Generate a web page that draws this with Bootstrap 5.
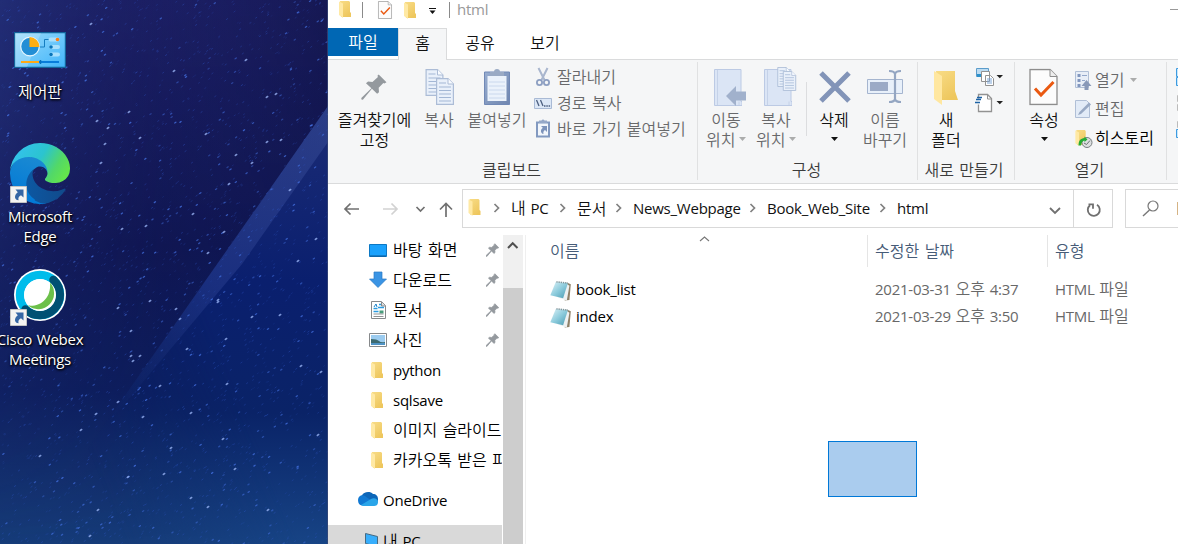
<!DOCTYPE html>
<html lang="ko">
<head>
<meta charset="utf-8">
<meta name="viewport" content="width=device-width, initial-scale=1">
<title>html</title>
<link href="https://cdn.jsdelivr.net/npm/bootstrap@5.3.0/dist/css/bootstrap.min.css" rel="stylesheet">
<style>
  body{width:1178px;height:544px;overflow:hidden;font-family:"Noto Sans CJK KR",sans-serif;font-size:16px;line-height:20px;color:#111;word-spacing:1px;font-weight:350}
  svg{display:block;flex:none}
  .lt{font-family:"Open Sans","Noto Sans CJK KR",sans-serif;font-size:15px;letter-spacing:-.24px;font-weight:400}
  .kt{font-family:"Noto Sans CJK KR",sans-serif;font-size:16px;letter-spacing:0;font-weight:350}
  .desk{width:328px;height:544px;overflow:hidden;background:#0e1552}
  .sky{left:0;top:0}
  .dicons{width:80px;padding-top:28px}
  .dicon{color:#fff;text-shadow:1px 1px 2px #000,0 1px 3px #000;white-space:nowrap}
  .dicon>svg{margin-bottom:-1px}
  .win{width:850px;height:544px;overflow:hidden;background:#fff}
  .titlebar{height:28px}
  .tabs{height:32px;border-bottom:1px solid #dadbdc}
  .tab{height:28px;line-height:28px;text-align:center}
  .tab-file{width:70px;background:#0067b4;color:#fff;line-height:27px}
  .tab-on{width:49px;height:32px;background:#f5f6f7;border:1px solid #dadbdc;border-bottom:0;line-height:27px}
  .ribbon{height:124px;background:#f5f6f7;border-bottom:1px solid #dadbdc}
  .grp{height:118px;margin-top:2px;border-right:1px solid #e0e1e2;flex:none}
  .grp-items{height:96px;padding-top:4px}
  .grp-name{color:#3c3c3c;text-align:center;margin-top:1px;padding-right:2px}
  .big{text-align:center;white-space:nowrap;flex:none}
  .big>svg{margin:0 auto -1px}
  .off{color:#68696b}
  .rowi{height:26px;white-space:nowrap}
  .rowi span,.opens span{margin-top:-2px}
  .vline{width:1px;height:54px;background:#dcdddf;margin-top:16px;flex:none}
  .nav-row{height:51px;padding-top:5px}
  .box{height:39px;border:1px solid #d9d9d9}
  .crumbs{padding-left:5px;padding-bottom:2px}
  .side{width:174px;overflow:hidden}
  .side-item{height:30px;width:174px;white-space:nowrap;color:#000;position:relative}
  .side-item:not(.lt){padding-bottom:2px}
  .side-item:not(.lt)>svg:first-child{margin-top:2px}
  .side-item .pin{position:absolute;right:3px;top:8px;background:#fff;stroke:#94999e;stroke-width:1.5}
  .sel-row{background:#d9d9d9;height:30px}
  .scroll{width:20px;background:#f0f0f0;margin-left:1px}
  .thumb{background:#cdcdcd;height:256px}
  .hd{height:32px;color:#465b77;line-height:30px}
  .hd>div{border-right:1px solid #e5e5e5;flex:none}
  .filerow{height:27px}
  .filerow svg{margin:4px 5px 0 -1px}
  .dim{color:#686868}
  .marquee-box{position:absolute;left:500px;top:441px;width:89px;height:56px;background:#aaccee;border:1px solid #0078d7}
</style>
</head>
<body>
<svg width="0" height="0" class="position-absolute">
  <defs>
    <linearGradient id="gf" x1="0" y1="0" x2="0.6" y2="1"><stop offset="0" stop-color="#f8dc86"/><stop offset="1" stop-color="#eec75e"/></linearGradient>
    <linearGradient id="gp" x1="0" y1="0" x2="1" y2="1"><stop offset="0" stop-color="#dff3f8"/><stop offset=".5" stop-color="#8ccbdc"/><stop offset="1" stop-color="#4799b0"/></linearGradient>
    <linearGradient id="gb" x1="0" y1="0" x2="1" y2="1"><stop offset="0" stop-color="#98add0"/><stop offset="1" stop-color="#6f86b0"/></linearGradient>
    <symbol id="folder" viewBox="0 0 12 17"><path d="M1 0h9l1 1v10l1 1v4H2z" fill="url(#gf)"/><path d="M0 .5 4 2.6V17L0 14z" fill="#ffe9a4"/></symbol>
    <symbol id="pin" viewBox="0 0 25 25"><path d="M17 .5 24.500 8 22.500 9.200 21.500 8.700 17 13.200 17.300 17.500 15.500 19 10.500 14.300 1.800 24.800.4 24.600.3 23 10 13.800 4.800 8.900 6.800 7.300 11 7.600 16.300 2.800 15.800 1.800z" fill="#94999e"/></symbol>
    <symbol id="notepad" viewBox="0 0 20 19"><path d="M16 1.500 19.800 3 18.500 18 14 18.500z" fill="#8e8068"/><path d="M15 2 18.500 4.500 16 18.500 7 15.500z" fill="#edf1f2"/><path d="M5.500 1 17 2 12.500 16.500.3 13.500z" fill="url(#gp)"/><path d="M6 .8 17 2" stroke="#81969c" stroke-width="1.400" stroke-dasharray="1.300 .8"/></symbol>
    <symbol id="sheet" viewBox="0 0 18 27"><path d="M.6.6H12L17.400 6V26.400H.6z" fill="#e9f0fa" stroke="#acbcd6" stroke-width="1.200"/><path d="M12 .6V6h5.400" fill="#f8fbff" stroke="#acbcd6"/><path d="M3 5h7M3 9h12M3 12.500h12M3 16h12M3 19.500h12M3 23h12" stroke="#a3b7d5"/></symbol>
    <symbol id="check" viewBox="0 0 29 37"><path d="M1 1H21L28 8V36H1z" fill="#fcfcfc" stroke="#8d8d8d" stroke-width="1.300"/><path d="M21 1V8h7" fill="#eee" stroke="#8d8d8d"/><path d="m6 20 6 6.500L24.500 13.500" fill="none" stroke="#ea5911" stroke-width="3"/></symbol>
    <symbol id="tri" viewBox="0 0 7 4"><path d="M0 0h7L3.500 4z" fill="currentColor"/></symbol>
    <symbol id="chev" viewBox="0 0 28 12"><path d="m11.500 2 4 4-4 4" fill="none" stroke="#808080" stroke-width="1.700"/></symbol>
    <symbol id="short" viewBox="0 0 17 17"><path d="M.5.5h16v16H.5z" fill="#f4f4f2" stroke="#c3c3c3"/><path d="M5.500 3.500h8v8l-2.500-2.300C8.500 10.500 8 12 8.600 14.300 4.500 14 3.500 9.500 7.800 6.200z" fill="#3566a4"/></symbol>
    <symbol id="book" viewBox="0 0 28 37"><path d="M.5.500H27V32.500H28V36.500H.5z" fill="#dbe5f5" stroke="#bccae4"/><path d="M3.500 1V36M25 32.500V36" stroke="#c5d2e8"/></symbol>
  </defs>
</svg>
<main class="d-flex">
  <section class="desk position-relative flex-shrink-0">
    <svg id="sky" class="sky position-absolute" width="328" height="544" viewBox="0 0 328 544">
      <defs>
        <linearGradient id="s1" x1="0" y1="0" x2="0" y2="1"><stop offset="0" stop-color="#1c1f64"/><stop offset=".45" stop-color="#0f1652"/><stop offset=".72" stop-color="#0c1d5c"/><stop offset="1" stop-color="#163c79"/></linearGradient>
        <linearGradient id="s2" x1="0" y1="0" x2="1" y2="0"><stop offset="0" stop-color="#25357f" stop-opacity=".65"/><stop offset=".5" stop-color="#1a1e62" stop-opacity=".1"/><stop offset="1" stop-color="#0b0c35" stop-opacity=".35"/></linearGradient>
        <linearGradient id="s3" x1="0" y1="0" x2="0" y2="1"><stop offset="0" stop-color="#1c2c76"/><stop offset=".4" stop-color="#0a1f6e"/><stop offset=".7" stop-color="#0a2367"/><stop offset="1" stop-color="#174485"/></linearGradient>
        <linearGradient id="s4" gradientUnits="userSpaceOnUse" x1="328" y1="110" x2="110" y2="420"><stop offset="0" stop-color="#3a4f99" stop-opacity=".5"/><stop offset=".55" stop-color="#33489a" stop-opacity=".38"/><stop offset="1" stop-color="#26428d" stop-opacity="0"/></linearGradient>
        <linearGradient id="s5" gradientUnits="userSpaceOnUse" x1="80" y1="430" x2="230" y2="370"><stop offset="0" stop-color="#fff" stop-opacity="0"/><stop offset="1" stop-color="#fff"/></linearGradient>
        <linearGradient id="s6" x1="0" y1="0" x2="0" y2="1"><stop offset="0" stop-color="#fff"/><stop offset=".65" stop-color="#fff" stop-opacity=".35"/><stop offset="1" stop-color="#fff" stop-opacity="0"/></linearGradient>
        <mask id="m1"><rect width="328" height="544" fill="url(#s5)"/></mask>
        <mask id="m2"><rect width="328" height="544" fill="url(#s6)"/></mask>
      </defs>
      <path d="M0 0h328v544H0z" fill="url(#s1)"/>
      <path d="M0 0h328v544H0z" fill="url(#s2)" mask="url(#m2)"/>
      <path d="M328 106 80 460 20 544H328z" fill="url(#s3)" mask="url(#m1)"/>
      <path d="M328 106V142L242 264 90 445z" fill="url(#s4)"/>
      <g id="stars" stroke-linecap="round"></g>
      <path d="M327.500 0v544" stroke="#3b4a78" stroke-opacity=".7"/>
    </svg>
    <div class="dicons position-relative">
      <div class="dicon d-flex flex-column align-items-center" style="height:115px">
        <svg width="60" height="54" viewBox="10 28 60 54">
          <defs><linearGradient id="cp" x1="0" y1="0" x2="1" y2="1"><stop offset="0" stop-color="#9cdcfb"/><stop offset="1" stop-color="#41b5fa"/></linearGradient></defs>
          <path d="M14.600 32.600h50.800v34.800H14.600z" fill="url(#cp)" stroke="#12659b" stroke-width="1.200"/><path d="M15 33h26L27 67H15z" fill="#fff" opacity=".2"/>
          <circle cx="30" cy="46.500" r="9.300" fill="#238ed5" stroke="#e5f6ff" stroke-width="1.200"/><path d="M29.500 47V37a10 10 0 0 1 10 10z" fill="#ffae13"/>
          <path d="M40 47h4.500v-7.500H49" fill="none" stroke="#157dc0"/><path d="M50.500 39.500h7M51 47h7M51 54.500h7" stroke="#a9e0fd" stroke-width="4" stroke-linecap="round"/>
          <circle cx="57.500" cy="39.500" r="1.800" fill="#ff7c12"/><circle cx="51" cy="47" r="1.800" fill="#0874b9"/><circle cx="51" cy="54.500" r="1.800" fill="#0874b9"/>
          <path d="M21 62h18" stroke="#ffa914" stroke-width="2"/><path d="M39 62h20" stroke="#087dda" stroke-width="2"/><path d="M40.500 60v4" stroke="#0671be" stroke-width="1.500"/>
        </svg>
        <div>제어판</div>
      </div>
      <div class="dicon d-flex flex-column align-items-center" style="height:122px">
        <svg width="60" height="64" viewBox="0 0 60 64">
          <defs>
            <linearGradient id="e1" x1="0" y1="0" x2="1" y2="0"><stop offset="0" stop-color="#0c59a4"/><stop offset="1" stop-color="#114a8b"/></linearGradient>
            <linearGradient id="e2" x1=".6" y1="0" x2=".3" y2="1"><stop offset="0" stop-color="#1b8ad2"/><stop offset="1" stop-color="#0078d7"/></linearGradient>
            <linearGradient id="e3" x1="0" y1=".2" x2="1" y2=".6"><stop offset="0" stop-color="#35c1f1"/><stop offset=".5" stop-color="#2bc4cf"/><stop offset=".8" stop-color="#52d868"/><stop offset="1" stop-color="#63e44d"/></linearGradient>
          </defs>
          <g transform="scale(.2344) translate(-4.630 -4.920)">
            <path fill="url(#e1)" d="M235.680 199.700a93.730 93.730 0 0 1-10.540 4.710 101.870 101.870 0 0 1-35.900 6.460c-47.320 0-88.540-32.550-88.540-74.320A31.480 31.480 0 0 1 117.130 109c-42.800 1.800-53.800 46.400-53.800 72.530 0 73.880 68.090 81.370 82.760 81.370 7.910 0 19.840-2.300 27-4.560l1.310-.44a128.340 128.340 0 0 0 66.600-52.800 4 4 0 0 0-5.320-5.400Z"/>
            <path fill="url(#e2)" d="M110.340 246.340A79.200 79.200 0 0 1 87.600 225a80.720 80.720 0 0 1 29.530-116c3.120-1.470 8.450-4.130 15.540-4a32.350 32.350 0 0 1 25.690 13 31.880 31.880 0 0 1 6.360 18.660c0-.21 24.460-79.600-80-79.600-43.900 0-80 41.660-80 78.210a130.150 130.150 0 0 0 12.110 56 128 128 0 0 0 156.380 67.110 75.550 75.550 0 0 1-62.780-8Z"/>
            <path fill="url(#e3)" d="M156.940 153.780c-.81 1.050-3.300 2.500-3.300 5.660 0 2.610 1.700 5.120 4.720 7.230 14.380 10 41.490 8.680 41.560 8.680a59.560 59.560 0 0 0 30.270-8.350 61.380 61.380 0 0 0 30.430-52.880c.26-22.410-8-37.310-11.340-43.910-21.190-41.450-66.930-65.290-116.670-65.290a128 128 0 0 0-128 126.200c.48-36.540 36.800-66.050 80-66.050 3.500 0 23.460.34 42 10.070 16.340 8.580 24.900 18.940 30.850 29.210 6.180 10.670 7.280 24.150 7.280 29.520s-2.740 13.330-7.800 19.910Z"/>
          </g>
          <use href="#short" x="0" y="43" width="17" height="17"/>
        </svg>
        <div class="lt text-center">Microsoft<br>Edge</div>
      </div>
      <div class="dicon d-flex flex-column align-items-center">
        <svg width="60" height="65" viewBox="10 265 60 65">
          <circle cx="40" cy="295" r="26" fill="#fff"/>
          <circle cx="40" cy="295" r="20" fill="none" stroke="#00bceb" stroke-width="8.500"/>
          <path d="M53.500 280A20.200 20.200 0 0 1 25.500 309.500" fill="none" stroke="#005073" stroke-width="8.500" stroke-linecap="round"/>
          <circle cx="40" cy="295" r="16" fill="#fff"/>
          <path d="M50 282.500A16 16 0 0 1 28 305.600C40 307 51.500 299 50 282.500z" fill="#6cc04a"/>
          <use href="#short" x="10" y="309" width="17" height="17"/>
        </svg>
        <div class="lt text-center">Cisco Webex<br>Meetings</div>
      </div>
    </div>
  </section>

  <section class="win position-relative flex-shrink-0">
    <div class="titlebar d-flex">
      <svg width="129" height="28" viewBox="328 0 129 28">
        <use href="#folder" x="339" y="1" width="12" height="17"/>
        <path d="M362.500 2v16M449.500 2v16" stroke="#8a8a8a"/>
        <use href="#check" x="377.500" y="1" width="15" height="18"/>
        <use href="#folder" x="404" y="2" width="12" height="17"/>
        <path d="M429 8.500h7" stroke="#111"/><path d="M429.500 10.500h6l-3 3.500z" fill="#111"/>
      </svg>
      <div class="lt" style="color:#999;margin-top:-1px">html</div>
      <svg class="ms-auto" width="8" height="28"><path d="M0 9.500h8" stroke="#999"/></svg>
    </div>
    <div class="tabs d-flex">
      <div class="tab tab-file">파일</div><div class="tab tab-on">홈</div>
      <div class="tab" style="width:66px">공유</div><div class="tab" style="width:64px">보기</div>
    </div>

    <div class="ribbon d-flex">
      <div class="grp" style="width:370px">
        <div class="grp-items d-flex">
          <div class="big" style="width:93px"><svg width="30" height="44" viewBox="361 66 30 44"><use href="#pin" x="362" y="74" width="26" height="26"/></svg>즐겨찾기에<br>고정</div>
          <div class="big off" style="width:36px"><svg width="34" height="44" viewBox="422 66 34 44"><use href="#sheet" x="425" y="69" width="19" height="27"/><use href="#sheet" x="435" y="78" width="20" height="27"/></svg>복사</div>
          <div class="big off" style="width:80px"><svg width="30" height="44" viewBox="482 66 30 44"><path d="M484.500 72h25v32.500h-25z" fill="url(#gb)" stroke="#7189b6"/><path d="M487.500 76h19v25h-19z" fill="#ebf2fb"/><path d="M489 82h16M489 86h16M489 90h16M489 94h16M489 98h16" stroke="#cad8ed"/><path d="M490 76v-4h4a3 3 0 0 1 6 0h4v4z" fill="#9aaac4"/></svg>붙여넣기</div>
          <div class="off" style="margin-top:-2px;margin-left:-4px">
            <div class="rowi d-flex align-items-center"><svg width="20" height="24" viewBox="533 65 20 24"><path d="m538.500 68 6 12M547.500 68l-6 12" stroke="#a9b6ce" stroke-width="2"/><circle cx="539.500" cy="82.500" r="2.600" fill="none" stroke="#8d9fc2" stroke-width="1.800"/><circle cx="546.500" cy="82.500" r="2.600" fill="none" stroke="#8d9fc2" stroke-width="1.800"/></svg><span class="ms-1">잘라내기</span></div>
            <div class="rowi d-flex align-items-center"><svg width="20" height="24" viewBox="533 91 20 24"><path d="M534.500 98.500h17v10h-17z" fill="#dce7f6" stroke="#a9bad5"/><path d="m536.500 100 2.500 6M540.500 100l2.500 6" stroke="#4c5f80" stroke-width="1.300"/><path d="M544 106h1.500m.8 0h1.500m.8 0h1.500" stroke="#4c5f80" stroke-width="1.500"/></svg><span class="ms-1">경로 복사</span></div>
            <div class="rowi d-flex align-items-center"><svg width="20" height="24" viewBox="533 117 20 24"><path d="M537 122.500h12v14h-12z" fill="#f2f6fb" stroke="#8299c0" stroke-width="2"/><path d="M539 123v-2.500h2.500a1.700 1.700 0 0 1 3 0h2.500v2.500z" fill="#95a8c8"/><path d="M541 126h6v6l-2-2c-1.500 1-2 2.500-1.500 4-3-.5-3.500-4-.7-6.200z" fill="#7c93bb"/></svg><span class="ms-1">바로 가기 붙여넣기</span></div>
          </div>
        </div>
        <div class="grp-name">클립보드</div>
      </div>
      <div class="grp" style="width:220px">
        <div class="grp-items d-flex">
          <div class="big off" style="width:58px;padding-left:8px"><svg width="34" height="44" viewBox="714 66 34 44"><use href="#book" x="714" y="69" width="28" height="37"/><path d="m726 96 10-10v5.500h10v9h-10v5.500z" fill="#a1b1cc"/></svg><div style="margin-left:-10px">이동</div><div class="d-flex align-items-center"><span style="margin-right:4px">위치</span><svg width="7" height="4" class="text-black-50"><use href="#tri" opacity=".6"/></svg></div></div>
          <div class="big off" style="width:50px"><svg width="36" height="44" viewBox="763 66 36 44"><use href="#book" x="764" y="69" width="28" height="37"/><use href="#sheet" x="777" y="67" width="14" height="20"/><use href="#sheet" x="782" y="71" width="15" height="20"/></svg><div style="margin-left:-10px">복사</div><div class="d-flex align-items-center"><span style="margin-right:4px">위치</span><svg width="7" height="4" class="text-black-50"><use href="#tri" opacity=".6"/></svg></div></div>
          <div class="vline"></div>
          <div class="big" style="width:54px"><svg width="34" height="44" viewBox="817 66 34 44"><path d="m821 73 28 28M849 73l-28 28" stroke="#8294b8" stroke-width="5"/></svg>삭제<svg width="7" height="4" style="margin-top:8px"><use href="#tri"/></svg></div>
          <div class="big off" style="width:48px"><svg width="38" height="44" viewBox="866 66 38 44"><path d="M867.500 79.500h35v14h-35z" fill="#e8f0fa" stroke="#a5b5cf"/><path d="M870 82h18v9h-18z" fill="#9baac6"/><path d="M889 71q5.500 0 6 3 .5-3 6-3M889 102q5.500 0 6-3 .5 3 6 3M895 73v27" fill="none" stroke="#94a6c2" stroke-width="2.200"/></svg>이름<br>바꾸기</div>
        </div>
        <div class="grp-name">구성</div>
      </div>
      <div class="grp" style="width:97px">
        <div class="grp-items d-flex">
          <div class="big" style="width:56px"><svg width="30" height="44" viewBox="931 66 30 44"><path d="M936 71h19v20l3 9h-20z" fill="url(#gf)"/><path d="m934 71 8 5v29l-8-6z" fill="#ffe7a0"/></svg>새<br>폴더</div>
          <svg width="32" height="54" viewBox="974 66 32 54"><path d="M976.500 68.500h12v8h-12z" fill="#bddcf2" stroke="#5b9ccb"/><path d="M977 74h6v3h-6z" fill="#2e91cb"/><path d="M981.500 71.500h8v10h-8zM985.500 75.500h5l3 3v7h-8z" fill="#fff" stroke="#929292"/><path d="M987 79h5M987 81h5M987 83h5" stroke="#7aa5d7"/><path d="M978.500 98.500V94.500h9l4 4v13h-13v-7" fill="#fff" stroke="#929292" stroke-width="1.300"/><path d="M987.500 95v4h4" fill="none" stroke="#929292"/><path d="M977 97.500h5M976 99.500h5M975 102.500h5" stroke="#1e63a5" stroke-width="1.300"/><path d="M996.500 75h6.500l-3.200 3.300zM996.500 101h6.500l-3.200 3.300z" fill="#222"/></svg>
        </div>
        <div class="grp-name text-nowrap" style="padding-right:4px">새로 만들기</div>
      </div>
      <div class="grp" style="width:152px">
        <div class="grp-items d-flex">
          <div class="big" style="width:58px"><svg width="31" height="44" viewBox="1029 66 31 44"><use href="#check" x="1029" y="68.500" width="29" height="37"/></svg>속성<svg width="7" height="4" style="margin-top:8px"><use href="#tri"/></svg></div>
          <div class="off opens" style="margin-top:-1px">
            <div class="d-flex align-items-center" style="height:29px"><svg width="22" height="24" viewBox="1073 68 22 24"><path d="M1075.500 71.500h13v16h-13z" fill="#e8eef7" stroke="#b0bfd6"/><path d="M1077.500 74h3v3h-3zm0 5h3v3h-3zm0 5h3v3h-3z" fill="#8196be"/><path d="M1082 75.500h5M1082 80.500h3" stroke="#93a7ca"/><path d="m1086.500 80 5 6h-3v4h-4v-4h-3z" fill="#8999b8"/></svg><span>열기</span><svg width="7" height="4" class="text-black-50" style="margin-left:6px"><use href="#tri" opacity=".6"/></svg></div>
            <div class="d-flex align-items-center" style="height:29px"><svg width="22" height="24" viewBox="1073 97 22 24"><path d="M1075.500 100.500h11l3 3v14h-14z" fill="#e2ebf7" stroke="#b0bfd6"/><path d="m1078 115 3-1 10-9.500-2-2-9.500 9.500z" fill="#98a9c4"/></svg><span>편집</span></div>
            <div class="d-flex align-items-center text-black" style="height:29px"><svg width="22" height="24" viewBox="1073 126 22 24"><use href="#folder" x="1075" y="130" width="12" height="16"/><circle cx="1087" cy="142.500" r="5" fill="#dcdfe0" stroke="#777e80"/><path d="m1084 143 2.500 1.500 3.500-4" fill="none" stroke="#687072"/><path d="M1078.500 145.500c0-5 2-7 6-7.500v-1.500l3 3-3 2.500v-1.500c-2 .5-3 2-3.500 5z" fill="#25ac35"/></svg><span>히스토리</span></div>
          </div>
        </div>
        <div class="grp-name">열기</div>
      </div>
      <svg width="12" height="124" viewBox="1166 60 12 124"><path d="M1175.500 68.500h5v8h-5zm0 9h5v8h-5z" fill="#c9e7fb" stroke="#3d9be0"/><path d="M1176.500 95.500h4v6h-4zm0 9h4v6h-4zm0 17h4v6h-4z" fill="#fff" stroke="#bbb"/><path d="M1175.500 129.500h5v8h-5z" fill="#c9e7fb" stroke="#3d9be0"/></svg>
    </div>

    <div class="nav-row d-flex">
      <svg width="134" height="39" viewBox="328 189 134 39" fill="none" stroke="#707070" stroke-width="1.700"><path d="M359 209h-14M350.500 203.500 345 209l5.500 5.500"/><path d="M383 209h14M391.500 203.500l5.500 5.500-5.500 5.500" stroke="#d2d2d2"/><path d="m416.500 207 4 4 4-4"/><path d="M446 217v-13M440 209.500l6-6 6 6"/></svg>
      <div class="box crumbs d-flex align-items-center lt" style="width:651px">
        <svg width="14" height="17"><use href="#folder" width="13" height="17"/></svg>
        <svg width="28" height="12" style="margin-left:1px"><use href="#chev"/></svg><span class="text-nowrap" style="width:38px"><span class="kt">내</span> PC</span>
        <svg width="28" height="12"><use href="#chev"/></svg><span style="width:28px" class="text-nowrap kt">문서</span>
        <svg width="28" height="12"><use href="#chev"/></svg><span style="width:106px">News_Webpage</span>
        <svg width="28" height="12"><use href="#chev"/></svg><span style="width:102px">Book_Web_Site</span>
        <svg width="28" height="12"><use href="#chev"/></svg><span>html</span>
        <svg class="ms-auto" width="64" height="37" viewBox="1048 189 64 37" fill="none" stroke="#707070" stroke-width="1.800" style="margin-bottom:-2px"><path d="m1050 207 5 5 5-5"/><path d="M1073.500 189v37" stroke="#d9d9d9" stroke-width="1"/><path d="M1097 203.800a6 6 0 1 1-7 .4M1088.500 203.300h4.500v4.500"/></svg>
      </div>
      <div class="box border-end-0 d-flex" style="width:53px;margin-left:12px">
        <svg width="52" height="37" viewBox="1126 190 52 37" fill="none" stroke="#777"><circle cx="1153" cy="206" r="5" stroke-width="1.200"/><path d="m1149.500 210-6.500 6" stroke-width="1.400"/><path d="M1177.500 202v13" stroke="#d5b384"/></svg>
      </div>
    </div>

    <div class="d-flex" style="height:309px">
      <div class="side">
        <div class="side-item d-flex align-items-center"><svg width="65" height="22" viewBox="0 0 65 22"><path d="M41.500 5.500h17v12h-17z" fill="#1aa1fc" stroke="#0c78c4"/><path d="M42 17h16" stroke="#0b5793"/></svg>바탕 화면<svg class="pin" width="13" height="14"><use href="#pin"/></svg></div>
        <div class="side-item d-flex align-items-center"><svg width="65" height="22"><path d="M46 3h8v7h4.500L50 18.500 41.500 10H46z" fill="#3a94e4" stroke="#2a78c4" stroke-width=".7"/></svg>다운로드<svg class="pin" width="13" height="14"><use href="#pin"/></svg></div>
        <div class="side-item d-flex align-items-center"><svg width="65" height="22"><path d="M43.500 2.500h10l4 4v13h-14z" fill="#fff" stroke="#86898b"/><path d="M53.500 3v4h4" fill="#ddd" stroke="#86898b"/><path d="M45.500 9.500h4M51 5.500h2M50 8.500h6M45.500 12.500h5" stroke="#2b9be0" stroke-width="1.500"/><path d="m46 8 2-3 1 3" fill="none" stroke="#1b84cc"/><path d="M51.500 11.500h4v3h-4z" fill="#489d7b"/><path d="M45.500 15h10M45.500 17.500h10" stroke="#909395"/></svg>문서<svg class="pin" width="13" height="14"><use href="#pin"/></svg></div>
        <div class="side-item d-flex align-items-center"><svg width="65" height="22"><path d="M41.500 4.500h17v13h-17z" fill="#fff" stroke="#86898b"/><path d="M43 6h14v10H43z" fill="#9cccf0"/><path d="M43 10q6 0 8 2t6 1v3H43z" fill="#3c6a70"/><path d="M43 14h14v2H43z" fill="#4f93c5"/></svg>사진<svg class="pin" width="13" height="14"><use href="#pin"/></svg></div>
        <div class="side-item d-flex align-items-center lt"><svg width="65" height="22"><use href="#folder" x="43" y="3" width="12" height="17"/></svg>python</div>
        <div class="side-item d-flex align-items-center lt"><svg width="65" height="22"><use href="#folder" x="43" y="3" width="12" height="17"/></svg>sqlsave</div>
        <div class="side-item d-flex align-items-center"><svg width="65" height="22"><use href="#folder" x="43" y="3" width="12" height="17"/></svg>이미지 슬라이드</div>
        <div class="side-item d-flex align-items-center"><svg width="65" height="22"><use href="#folder" x="43" y="3" width="12" height="17"/></svg>카카오톡 받은 파일</div>
        <div class="side-item d-flex align-items-center lt" style="margin-top:10px"><svg width="55" height="22" viewBox="328 490 55 22"><path d="M363 506a5 5 0 0 1-1-9.500c1-3.500 8-5 11-1.500 3 0 5 2 5 5 0 3-1 6-4 6z" fill="#0d66b8"/><path d="M358 501c0-4 4-6 7-4l11 8-2 1.500H362c-2.500-.5-4-2-4-5.500z" fill="#1179d3"/><path d="m361 506 10-6c3-2 7 0 7 3s-2 4-4 4h-11z" fill="#2aa5e9"/></svg>OneDrive</div>
        <div class="side-item sel-row d-flex align-items-center lt" style="margin-top:10px"><svg width="55" height="22" viewBox="328 529 55 22"><path d="m365.500 533.500 12 3v10l-12-3z" fill="#37aefc" stroke="#466a83"/></svg><span><span class="kt">내</span> PC</span></div>
      </div>
      <div class="scroll flex-shrink-0"><svg width="20" height="53" viewBox="0 0 20 53"><path d="m5 13 4.700-4.800L14.500 13" fill="none" stroke="#505050" stroke-width="2"/></svg><div class="thumb"></div></div>
      <div style="width:1px;margin-left:2px;background:#efefef"></div>
      <div class="flex-grow-1">
        <div class="hd d-flex position-relative">
          <div style="width:342px;padding-left:24px">이름</div><div style="width:180px;padding-left:7px">수정한 날짜</div><span style="padding-left:7px">유형</span>
          <svg class="position-absolute" style="left:173px;top:0" width="12" height="8"><path d="m1 6 4.500-4L10 6" fill="none" stroke="#777" stroke-width="1.100"/></svg>
        </div>
        <div style="padding-top:8px">
          <div class="filerow d-flex align-items-center lt"><div class="d-flex align-items-center text-black" style="width:349px;padding-left:25px"><svg width="21" height="20"><use href="#notepad"/></svg>book_list</div><div class="dim" style="width:180px">2021-03-31 <span class="kt">오후</span> 4:37</div><div class="dim">HTML <span class="kt">파일</span></div></div>
          <div class="filerow d-flex align-items-center lt"><div class="d-flex align-items-center text-black" style="width:349px;padding-left:25px"><svg width="21" height="20"><use href="#notepad"/></svg>index</div><div class="dim" style="width:180px">2021-03-29 <span class="kt">오후</span> 3:50</div><div class="dim">HTML <span class="kt">파일</span></div></div>
        </div>
      </div>
    </div>
    <div class="marquee-box"></div>
  </section>
</main>
<script>
// Star field: a seeded scatter of faint streaks plus the brightest stars by position.
(function(){
  let seed=71, h='';
  const r=()=>(seed=(seed*16807)%2147483647)/2147483647;
  const star=(x,y,c,o,w,l)=>{h+=`<path d="M${x.toFixed(1)} ${y.toFixed(1)}l${l} ${-l*.7}" stroke="${c}" stroke-opacity="${o.toFixed(2)}" stroke-width="${w}"/>`};
  for(let i=0;i<2200;i++)star(r()*328,r()*544,'#315bd0',.12+r()*.28,1,1.2);
  for(let i=0;i<420;i++)star(r()*328,r()*544,'#4674e6',.35+r()*.45,1.3,1.2);
  [[246,60],[174,71],[267,97],[129,112],[97,121],[108,128],[140,138],[105,144],[101,163],[267,142],[281,140],[236,155],[206,134],[229,184],[290,190],[193,214],[224,232],[208,253],[316,239],[298,261],[122,229],[146,226],[252,163],[276,94],[91,24],[218,300],[218,302],[180,319],[131,356],[160,386],[118,402],[96,414],[143,417],[191,413],[227,384],[226,339],[187,349],[131,331],[140,356],[133,361],[164,474],[128,477],[208,507],[268,510],[223,439],[235,469],[171,448],[191,498],[318,435],[252,317],[280,315],[301,366],[321,372],[81,430],[98,510],[90,536],[40,456],[118,308],[150,301],[176,309]]
    .forEach(p=>star(p[0]-.6,p[1]+.4,'#a3bdff',.75,1.7,1.2));
  document.getElementById('stars').innerHTML=h;
})();
</script>
<script src="https://cdn.jsdelivr.net/npm/bootstrap@5.3.0/dist/js/bootstrap.bundle.min.js"></script>
</body>
</html>
